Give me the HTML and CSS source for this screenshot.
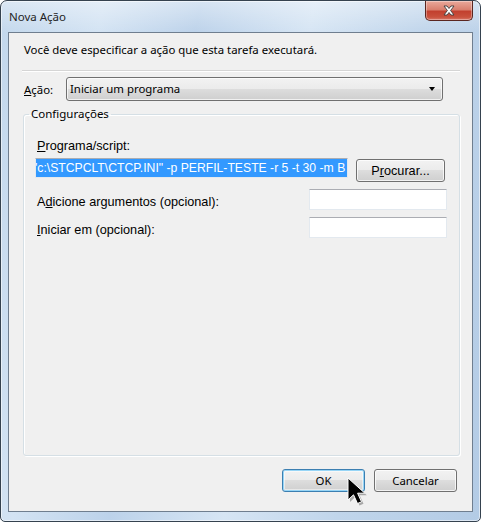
FILE: index.html
```html
<!DOCTYPE html>
<html lang="pt-BR">
<head>
<meta charset="utf-8">
<title>Nova Ação</title>
<link rel="stylesheet" href="styles.css">
</head>
<body>
<div class="window">
  <div class="titlebar">
    <span class="title">Nova Ação</span>
    <div class="close">
      <svg width="46" height="17" viewBox="0 0 46 17">
        <path d="M18 4 L21 4 L23 6.5 L25 4 L28 4 L24.6 8.5 L28 13 L25 13 L23 10.5 L21 13 L18 13 L21.4 8.5 Z" fill="#fff" stroke="#3b3b3b" stroke-width="0.9" stroke-linejoin="round"/>
      </svg>
    </div>
  </div>
  <div class="client">
    <p class="intro">Você deve especificar a ação que esta tarefa executará.</p>
    <div class="sep"></div>
    <div class="action-row">
      <span class="action-label"><u>A</u>ção:</span>
      <div class="combo">
        <span class="combo-text">Iniciar um programa</span>
        <span class="combo-arrow"></span>
      </div>
    </div>
    <fieldset class="group">
      <legend class="group-title">Configurações</legend>
      <div class="prog-label"><u>P</u>rograma/script:</div>
      <div class="prog-row">
        <div class="textbox wide"><span class="selection">"c:\STCPCLT\CTCP.INI" -p PERFIL-TESTE -r 5 -t 30 -m B</span></div>
        <div class="btn browse">P<u>r</u>ocurar...</div>
      </div>
      <div class="field-row">
        <span class="field-label">A<u>d</u>icione argumentos (opcional):</span>
        <div class="textbox small"></div>
      </div>
      <div class="field-row">
        <span class="field-label"><u>I</u>niciar em (opcional):</span>
        <div class="textbox small"></div>
      </div>
    </fieldset>
    <div class="buttons">
      <div class="btn default">OK</div>
      <div class="btn">Cancelar</div>
    </div>
  </div>
  <svg class="cursor" width="26" height="32" viewBox="0 0 26 32">
    <path d="M3 3 L3 25 L8.5 19.8 L12.5 28.5 L16.5 26.8 L12.6 18.2 L19.8 18.2 Z" fill="rgba(0,0,0,0.3)"/>
    <path d="M1 1 L1 23 L6.5 17.8 L10.5 26.5 L14.5 24.8 L10.6 16.2 L17.8 16.2 Z" fill="#000" stroke="#fff" stroke-width="1"/>
  </svg>
</div>
</body>
</html>
```
FILE: styles.css
```css
* { box-sizing: border-box; }
html, body { margin: 0; padding: 0; background: #ffffff; }
body { width: 481px; height: 522px; overflow: hidden; }

.window {
  position: relative;
  width: 481px;
  height: 522px;
  display: flex;
  flex-direction: column;
  padding: 0 7px 9px 7px;
  border: 1px solid #35424f;
  border-radius: 7px 7px 5px 5px;
  background:
    linear-gradient(to bottom, rgba(255,255,255,0.4), rgba(255,255,255,0) 32px),
    linear-gradient(100deg, #c2d7ec 0%, #d3e3f3 18%, #bcd2ea 35%, #d6e5f4 55%, #c0d5eb 75%, #b3cbe5 100%);
  box-shadow: inset 0 0 0 1px rgba(255,255,255,0.55);
  font-family: "Noto Sans", "Open Sans", sans-serif;
  font-size: 11.4px;
  color: #000;
}

.titlebar {
  height: 31px;
  display: flex;
  align-items: flex-start;
}
.title {
  margin-top: 8px;
  padding-left: 1px;
  font-size: 11.5px;
  line-height: 16px;
  color: #1e1e1e;
}
.close {
  margin-left: auto;
  width: 48px;
  height: 20px;
  border: 1px solid #5a2620;
  border-top: none;
  border-radius: 0 0 5px 5px;
  background: linear-gradient(to bottom, #e9a99b 0%, #d9806f 45%, #c2402f 55%, #c9513d 85%, #d9786a 100%);
  box-shadow: inset 0 0 0 1px rgba(255,255,255,0.35);
  display: flex;
  align-items: center;
  justify-content: center;
}

.client {
  flex: 1;
  display: flex;
  flex-direction: column;
  border: 1px solid #6f7e8f;
  background: #f0f0f0;
  padding: 0 12px 19px 13px;
}

.intro {
  margin: 9px 0 0 0;
  padding-left: 2px;
  line-height: 16px;
}
.sep {
  margin-top: 12px;
  height: 2px;
  border-top: 1px solid #d5d5d5;
  border-bottom: 1px solid #ffffff;
}

.action-row {
  margin-top: 5px;
  display: flex;
  align-items: center;
}
.action-label {
  width: 44px;
  padding-left: 2px;
}
.combo {
  width: 377px;
  height: 24px;
  border: 1px solid #707070;
  border-radius: 3px;
  background: linear-gradient(to bottom, #f2f2f2 0%, #ebebeb 50%, #dddddd 50%, #cfcfcf 100%);
  box-shadow: inset 0 0 0 1px rgba(255,255,255,0.7);
  display: flex;
  align-items: center;
  padding: 0 7px 0 3px;
}
.combo-text { flex: 1; line-height: 16px; }
.combo-arrow {
  width: 0; height: 0;
  border-left: 3.5px solid transparent;
  border-right: 3.5px solid transparent;
  border-top: 4px solid #000;
}

.group {
  flex: 1;
  margin: 5px 0 0 1px;
  padding: 0 12px 0 5px;
  border: 1px solid #d5dfe5;
  border-radius: 3px;
  box-shadow: inset 1px 1px 0 #fff, 1px 1px 0 #fff;
  min-width: 0;
}
.group-title {
  padding: 0 2px;
  line-height: 16px;
  font-size: 11.5px;
}

.prog-label, .field-label, .browse {
  font-family: "Liberation Sans", Arial, sans-serif;
  font-size: 12.7px;
}
.prog-label {
  margin-top: 17px;
  padding-left: 8px;
  line-height: 15px;
}
.prog-row {
  margin-top: 4px;
  padding-left: 6px;
  display: flex;
  align-items: flex-start;
  gap: 8px;
}
.textbox {
  height: 21px;
  background: #fff;
  border: 1px solid #e3e9ef;
  border-top-color: #abadb3;
}
.textbox.wide {
  width: 313px;
  height: 20px;
  overflow: hidden;
}
.selection {
  display: block;
  height: 18px;
  line-height: 18px;
  background: #3399ff;
  color: #fff;
  font-family: "Liberation Sans", Arial, sans-serif;
  font-size: 12.2px;
  white-space: nowrap;
  overflow: hidden;
  text-indent: -3px;
}
.textbox.small { width: 138px; }

.field-row {
  margin-top: 7px;
  display: flex;
  justify-content: space-between;
  align-items: flex-start;
}
.field-label {
  padding: 6px 0 0 8px;
  line-height: 15px;
}

.btn {
  height: 23px;
  border: 1px solid #707070;
  border-radius: 3px;
  background: linear-gradient(to bottom, #f2f2f2 0%, #ebebeb 50%, #dddddd 50%, #cfcfcf 100%);
  box-shadow: inset 0 0 0 1px rgba(255,255,255,0.75);
  display: flex;
  align-items: center;
  justify-content: center;
  line-height: 16px;
}
.browse {
  width: 89px;
  margin-top: 1px;
}
.buttons {
  margin-top: 13px;
  display: flex;
  justify-content: flex-end;
  gap: 9px;
  padding-right: 3px;
}
.buttons .btn { width: 83px; }
.btn.default {
  border-color: #3c7fb1;
  box-shadow: inset 0 0 0 1px #97d5f6, inset 0 0 0 2px rgba(255,255,255,0.5);
}

.cursor {
  position: absolute;
  left: 346px;
  top: 476px;
}
```
